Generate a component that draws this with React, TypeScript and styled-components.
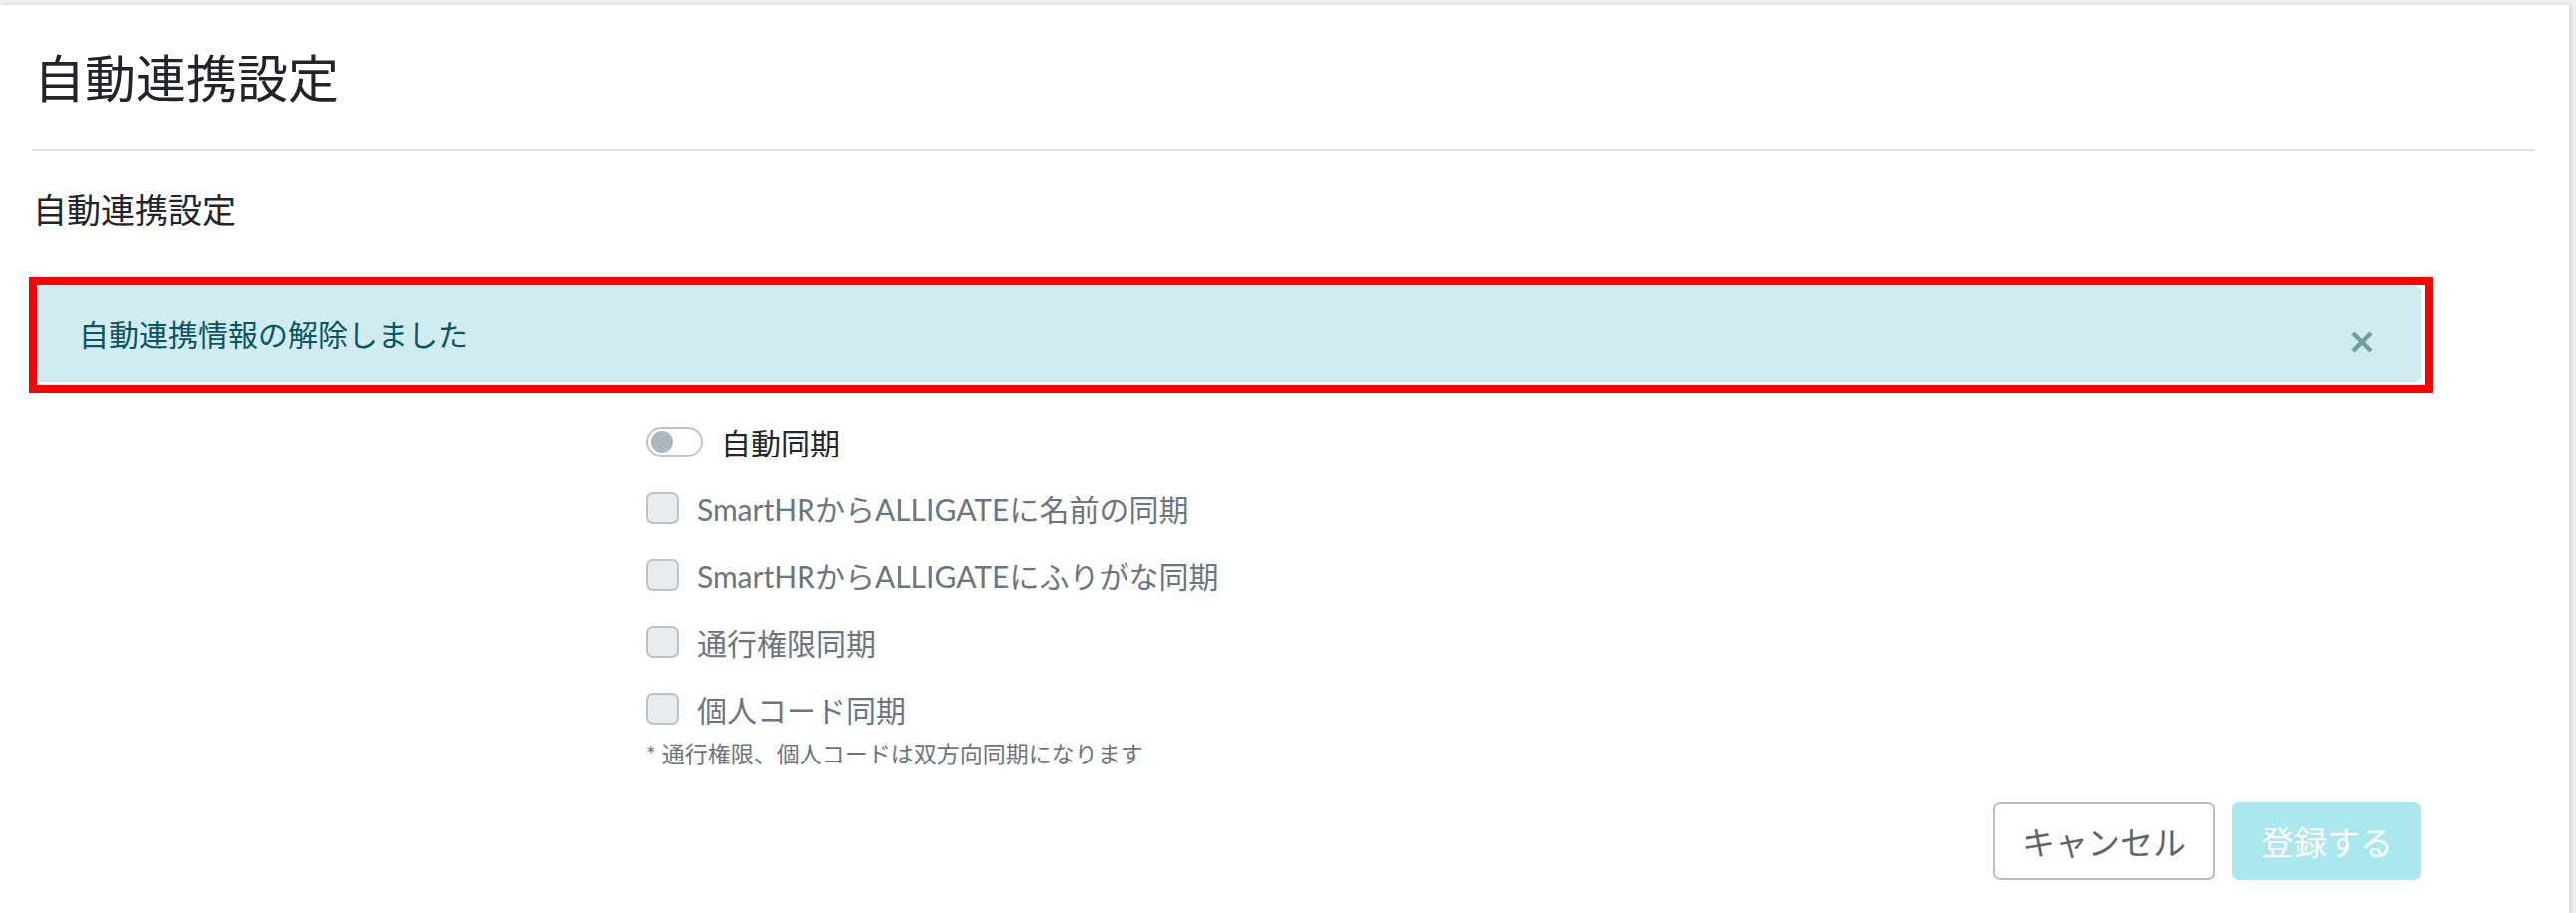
import React from 'react';
import styled, { createGlobalStyle } from 'styled-components';

const GlobalStyle = createGlobalStyle`
  html, body {
    margin: 0;
    padding: 0;
    background: #f1f1f1;
  }

  body {
    font-family: 'Lato', 'Noto Sans CJK JP', sans-serif;
    color: #212529;
  }
`;

const Page = styled.div`
  width: 2584px;
  height: 916px;
  overflow: hidden;
  padding-top: 5px;
  box-sizing: border-box;
`;

const Card = styled.section`
  width: 2577px;
  min-height: 911px;
  background: #fff;
  box-shadow: 2px 0 5px rgb(0 0 0 / 14%);
`;

const Header = styled.header`
  margin: 0 34px 0 32px;
  padding: 44px 0 40px 2px;
  border-bottom: 2px solid #e3e3e3;
`;

const Title = styled.h1`
  margin: 0;
  font-size: 51px;
  line-height: 60px;
  font-weight: 400;
  color: #212529;
`;

const Body = styled.div`
  width: 2396px;
  padding-left: 33px;
`;

const SectionTitle = styled.h2`
  margin: 40px 0 0;
  font-size: 34px;
  line-height: 40px;
  font-weight: 400;
  color: #212529;
`;

// red frame drawn around the flash message
const Highlight = styled.div`
  margin: 47px -12px 0 -4px;
  padding: 1px 4px 3px 0;
  border: 8px solid #ff0000;
`;

const Alert = styled.div`
  display: flex;
  align-items: center;
  justify-content: space-between;
  height: 96px;
  padding: 0 47px 0 41px;
  box-sizing: border-box;
  background: #d1ecf1;
  border: 1px solid #bee5eb;
  border-radius: 6px;
  color: #0c5460;
`;

const AlertText = styled.span`
  font-size: 30px;
  line-height: 40px;
`;

const CloseButton = styled.button`
  display: flex;
  padding: 0;
  margin-top: 16px;
  border: 0;
  background: none;
  cursor: pointer;
`;

const FormGrid = styled.div`
  display: grid;
  grid-template-columns: 3fr 9fr;
  margin-top: 29px;
`;

const Fields = styled.div`
  display: flex;
  flex-direction: column;
  padding-left: 16px;
`;

const FieldList = styled.div`
  display: flex;
  flex-direction: column;
  gap: 27px;
`;

const Field = styled.label<{ $strong?: boolean }>`
  display: flex;
  align-items: center;
  gap: 18px;
  height: 40px;
  font-size: 30px;
  color: ${(p) => (p.$strong ? '#212529' : '#6c757d')};
`;

const Toggle = styled.span`
  position: relative;
  width: 57px;
  height: 30px;
  box-sizing: border-box;
  border: 2px solid #bfc4c9;
  border-radius: 15px;
  background: #fff;

  &::after {
    content: '';
    position: absolute;
    top: 2px;
    left: 3px;
    width: 22px;
    height: 22px;
    border-radius: 50%;
    background: #adb5bd;
  }
`;

const Checkbox = styled.span`
  width: 33px;
  height: 32px;
  box-sizing: border-box;
  border: 2px solid #bcc1c6;
  border-radius: 7px;
  background: #e9ecef;
`;

const Note = styled.p`
  margin: 10px 0 0;
  font-size: 23px;
  line-height: 30px;
  color: #6c757d;
`;

const Actions = styled.div`
  display: flex;
  justify-content: flex-end;
  gap: 17px;
  margin-top: 34px;
`;

const Button = styled.button<{ $primary?: boolean }>`
  height: 78px;
  padding: 0 27px;
  box-sizing: border-box;
  font-family: inherit;
  font-size: 33px;
  border-radius: 7px;
  border: 2px solid ${(p) => (p.$primary ? '#abe7ef' : '#bdbdbd')};
  background: ${(p) => (p.$primary ? '#abe7ef' : '#fff')};
  color: ${(p) => (p.$primary ? '#fff' : '#5d646b')};
`;

const syncOptions = [
  'SmartHRからALLIGATEに名前の同期',
  'SmartHRからALLIGATEにふりがな同期',
  '通行権限同期',
  '個人コード同期',
];

const CloseIcon = () => (
  <svg width='24' height='24' viewBox='0 0 24 24'>
    <path d='M3 3 L21 21 M21 3 L3 21' stroke='#6f9da4' strokeWidth='4.5' fill='none' />
  </svg>
);

const App = () => (
  <>
    <GlobalStyle />
    <Page>
      <Card>
        <Header>
          <Title>自動連携設定</Title>
        </Header>
        <Body>
          <SectionTitle>自動連携設定</SectionTitle>
          <Highlight>
            <Alert>
              <AlertText>自動連携情報の解除しました</AlertText>
              <CloseButton aria-label='close'>
                <CloseIcon />
              </CloseButton>
            </Alert>
          </Highlight>
          <FormGrid>
            <div />
            <Fields>
              <FieldList>
                <Field $strong>
                  <Toggle />
                  自動同期
                </Field>
                {syncOptions.map((label) => (
                  <Field key={label}>
                    <Checkbox />
                    {label}
                  </Field>
                ))}
              </FieldList>
              <Note>* 通行権限、個人コードは双方向同期になります</Note>
              <Actions>
                <Button>キャンセル</Button>
                <Button $primary>登録する</Button>
              </Actions>
            </Fields>
          </FormGrid>
        </Body>
      </Card>
    </Page>
  </>
);

export default App;
